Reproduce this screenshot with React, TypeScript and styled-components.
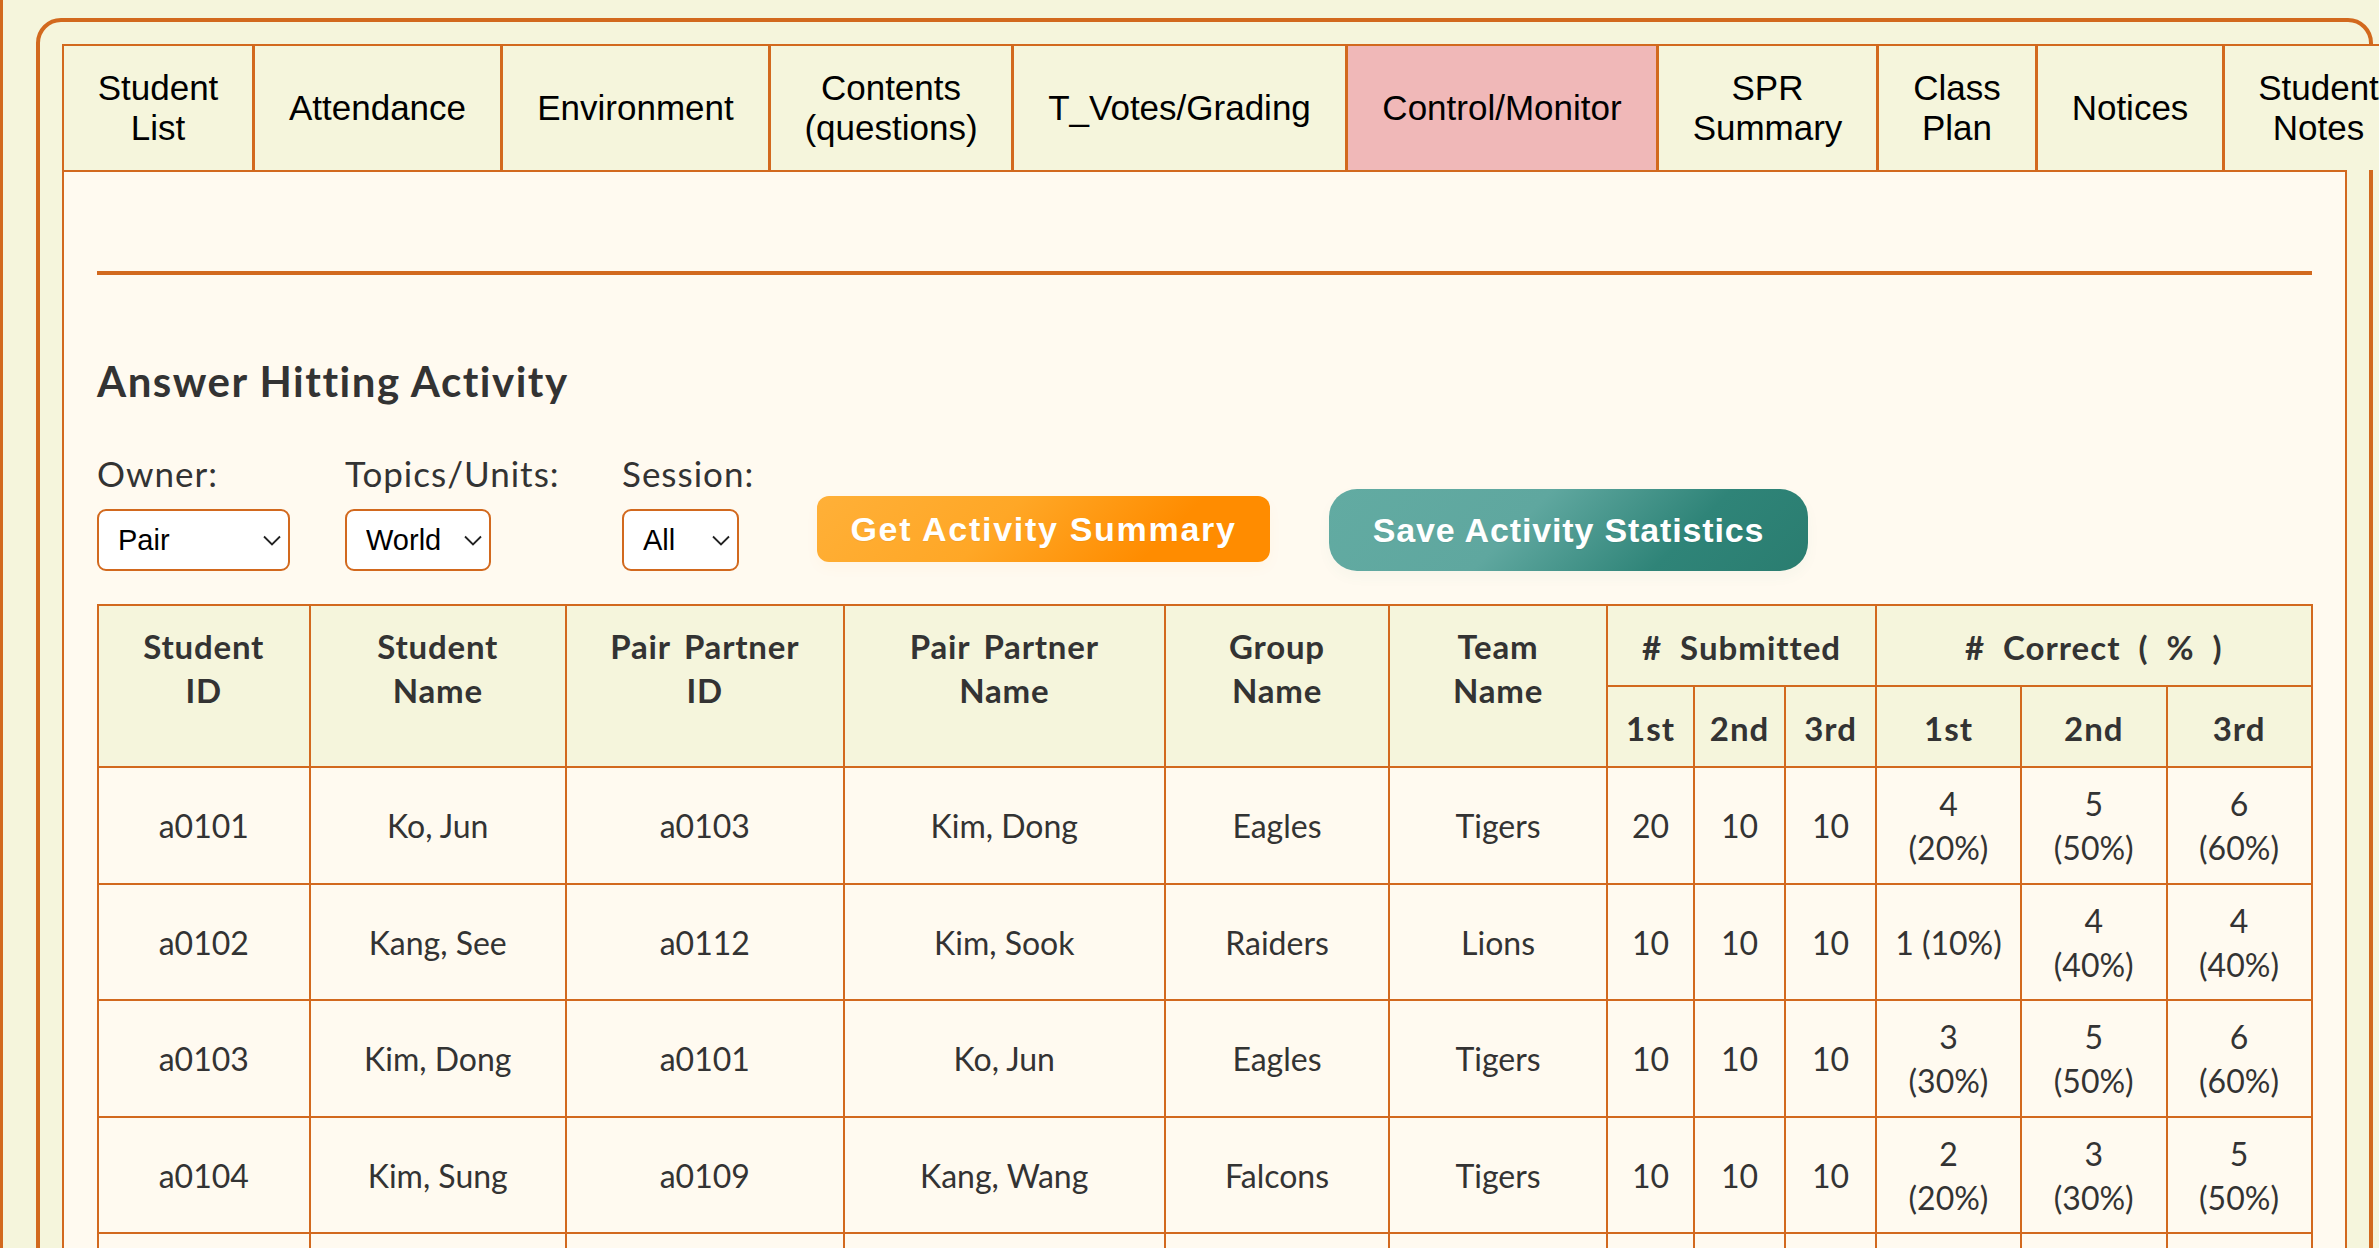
import React from 'react'
import styled, { createGlobalStyle } from 'styled-components'

const ORANGE = '#d2691e'
const BEIGE = '#f5f5dc'
const CREAM = '#fffaf0'
const COMIC = '"Comic Sans MS", "Lato", "Noto Sans", sans-serif'
const ARIAL = '"Liberation Sans", Arial, sans-serif'

const GlobalStyle = createGlobalStyle`
  html, body {
    margin: 0;
    padding: 0;
    height: 100%;
    overflow: hidden;
    background: ${BEIGE};
  }
`

const Page = styled.div`
  box-sizing: border-box;
  width: 2379px;
  height: 1248px;
  overflow: hidden;
  background: ${BEIGE};
  border-left: 3px solid ${ORANGE};
  padding: 18px 6px 0 33px;
`

const Frame = styled.div`
  box-sizing: border-box;
  height: 1300px;
  border: 4px solid ${ORANGE};
  border-radius: 25px 25px 0 0;
  padding: 22px 22px 0 22px;
`

const TabBar = styled.nav`
  display: flex;
  width: max-content;
  position: relative;
  z-index: 1;
  height: 126px;
  box-sizing: border-box;
  border-top: 2px solid ${ORANGE};
  border-left: 2px solid ${ORANGE};
`

const Tab = styled.div<{ $width: number; $active?: boolean }>`
  box-sizing: border-box;
  width: ${(p) => p.$width}px;
  display: flex;
  align-items: center;
  justify-content: center;
  text-align: center;
  border-right: 3px solid ${ORANGE};
  background: ${(p) => (p.$active ? '#f0b8b8' : BEIGE)};
  color: #000;
  font: 35px/40px ${ARIAL};
`

const Panel = styled.main`
  box-sizing: border-box;
  width: 2285px;
  height: 1200px;
  background: ${CREAM};
  border: 2px solid ${ORANGE};
  padding: 99px 33px 0;
`

const Divider = styled.hr`
  margin: 0;
  border: none;
  height: 4px;
  background: ${ORANGE};
`

const Heading = styled.h2`
  margin: 78px 0 0;
  color: #333;
  font: 700 42px/56px ${COMIC};
  letter-spacing: 1.5px;
`

const Controls = styled.div`
  display: flex;
  align-items: flex-end;
  margin-top: 43px;
`

const Field = styled.label<{ $width: number }>`
  display: flex;
  flex-direction: column;
  width: ${(p) => p.$width}px;
  color: #333;
  font: 35px/42px ${COMIC};
  letter-spacing: 1px;
`

const SelectWrap = styled.span<{ $width: number }>`
  position: relative;
  display: block;
  width: ${(p) => p.$width}px;
  margin-top: 15px;
`

const Select = styled.select`
  appearance: none;
  box-sizing: border-box;
  display: block;
  width: 100%;
  height: 62px;
  padding: 0 0 0 19px;
  background: #fff;
  color: #000;
  border: 2px solid ${ORANGE};
  border-radius: 9px;
  font: 29px ${ARIAL};
`

const Chevron = styled.svg`
  position: absolute;
  right: 9px;
  top: 26px;
  width: 18px;
  height: 11px;
  pointer-events: none;
`

const ActionButton = styled.button<{ $tone: 'orange' | 'teal' }>`
  box-sizing: border-box;
  border: none;
  color: #fff;
  font: 700 34px ${ARIAL};
  white-space: nowrap;
  text-shadow: 0 1px 1px rgba(0, 0, 0, 0.05);
  ${(p) =>
    p.$tone === 'orange'
      ? `
    letter-spacing: 1.7px;
    width: 453px;
    height: 66px;
    margin: 0 59px 9px 54px;
    border-radius: 12px;
    background: linear-gradient(135deg, #ffb038 0%, #ffa726 40%, #ff8c00 75%);
    box-shadow: 0 6px 14px rgba(255, 140, 0, 0.04);
  `
      : `
    letter-spacing: 0.85px;
    width: 479px;
    height: 82px;
    border-radius: 28px;
    background: linear-gradient(135deg, #62aba2 0%, #5fa79f 40%, #2f8478 72%, #2a7d70 100%);
    box-shadow: 0 6px 14px rgba(42, 125, 112, 0.04);
  `}
`

const Table = styled.table`
  table-layout: fixed;
  width: 2214px;
  margin-top: 33px;
  border-collapse: collapse;
  color: #333;
  font-family: ${COMIC};
`

const Head = styled.th`
  box-sizing: border-box;
  border: 2px solid ${ORANGE};
  background: ${BEIGE};
  vertical-align: top;
  padding: 18px 2px 0;
  font: 700 33px/44px ${COMIC};
  letter-spacing: 0.8px;
  word-spacing: 5px;
  text-align: center;
`

const SubHead = styled(Head)`
  vertical-align: middle;
  padding: 2px 0 0;
  letter-spacing: 1px;
  word-spacing: 9px;
`

const Cell = styled.td`
  box-sizing: border-box;
  border: 2px solid ${ORANGE};
  padding: 2px 4px 0;
  text-align: center;
  vertical-align: middle;
  white-space: pre-line;
  font: 32px/44px ${COMIC};
`

const Row = styled.tr`
  height: 116.5px;
`

const HeadRow = styled.tr`
  height: 81px;
`

const tabs = [
  { width: 191, lines: ['Student', 'List'] },
  { width: 248, lines: ['Attendance'] },
  { width: 268, lines: ['Environment'] },
  { width: 243, lines: ['Contents', '(questions)'] },
  { width: 334, lines: ['T_Votes/Grading'] },
  { width: 311, lines: ['Control/Monitor'], active: true },
  { width: 220, lines: ['SPR', 'Summary'] },
  { width: 159, lines: ['Class', 'Plan'] },
  { width: 187, lines: ['Notices'] },
  { width: 190, lines: ['Student', 'Notes'] },
]

const columns = [211.5, 256.5, 277.5, 321.5, 224, 218, 87, 91, 91, 145, 145.5, 145]

const rows = [
  ['a0101', 'Ko, Jun', 'a0103', 'Kim, Dong', 'Eagles', 'Tigers', '20', '10', '10', '4\n(20%)', '5\n(50%)', '6\n(60%)'],
  ['a0102', 'Kang, See', 'a0112', 'Kim, Sook', 'Raiders', 'Lions', '10', '10', '10', '1 (10%)', '4\n(40%)', '4\n(40%)'],
  ['a0103', 'Kim, Dong', 'a0101', 'Ko, Jun', 'Eagles', 'Tigers', '10', '10', '10', '3\n(30%)', '5\n(50%)', '6\n(60%)'],
  ['a0104', 'Kim, Sung', 'a0109', 'Kang, Wang', 'Falcons', 'Tigers', '10', '10', '10', '2\n(20%)', '3\n(30%)', '5\n(50%)'],
  ['', '', '', '', '', '', '', '', '', '', '', ''],
]

const filters = [
  { label: 'Owner:', value: 'Pair', options: ['Pair', 'Group', 'Team'], field: 248, select: 193 },
  { label: 'Topics/Units:', value: 'World', options: ['World', 'Science'], field: 277, select: 146 },
  { label: 'Session:', value: 'All', options: ['All', '1st', '2nd', '3rd'], field: 141, select: 117 },
]

const App: React.FC = () => {
  return (
    <Page>
      <GlobalStyle />
      <Frame>
        <TabBar>
          {tabs.map((tab) => (
            <Tab key={tab.lines.join(' ')} $width={tab.width} $active={tab.active}>
              <span>
                {tab.lines.map((line) => (
                  <div key={line}>{line}</div>
                ))}
              </span>
            </Tab>
          ))}
        </TabBar>
        <Panel>
          <Divider />
          <Heading>Answer Hitting Activity</Heading>
          <Controls>
            {filters.map((f) => (
              <Field key={f.label} $width={f.field}>
                {f.label}
                <SelectWrap $width={f.select}>
                  <Select defaultValue={f.value}>
                    {f.options.map((o) => (
                      <option key={o}>{o}</option>
                    ))}
                  </Select>
                  <Chevron viewBox='0 0 18 11' fill='none' stroke='#222' strokeWidth='1.8'>
                    <path d='M1 1.5l8 8 8-8' />
                  </Chevron>
                </SelectWrap>
              </Field>
            ))}
            <ActionButton $tone='orange'>Get Activity Summary</ActionButton>
            <ActionButton $tone='teal'>Save Activity Statistics</ActionButton>
          </Controls>
          <Table>
            <colgroup>
              {columns.map((w, i) => (
                <col key={i} width={w} />
              ))}
            </colgroup>
            <thead>
              <HeadRow>
                <Head rowSpan={2}>Student<br />ID</Head>
                <Head rowSpan={2}>Student<br />Name</Head>
                <Head rowSpan={2}>Pair Partner<br />ID</Head>
                <Head rowSpan={2}>Pair Partner<br />Name</Head>
                <Head rowSpan={2}>Group<br />Name</Head>
                <Head rowSpan={2}>Team<br />Name</Head>
                <SubHead colSpan={3}># Submitted</SubHead>
                <SubHead colSpan={3}># Correct ( % )</SubHead>
              </HeadRow>
              <HeadRow>
                {['1st', '2nd', '3rd', '1st', '2nd', '3rd'].map((h, i) => (
                  <SubHead key={i}>{h}</SubHead>
                ))}
              </HeadRow>
            </thead>
            <tbody>
              {rows.map((row, r) => (
                <Row key={r}>
                  {row.map((cell, c) => (
                    <Cell key={c}>{cell}</Cell>
                  ))}
                </Row>
              ))}
            </tbody>
          </Table>
        </Panel>
      </Frame>
    </Page>
  )
}

export default App
